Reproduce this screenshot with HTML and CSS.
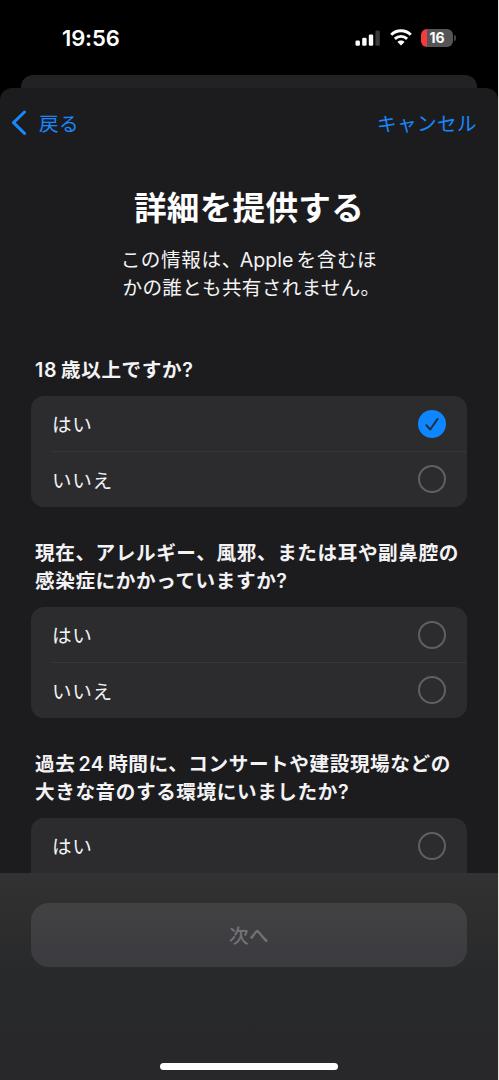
FILE: index.html
```
<!DOCTYPE html>
<html lang="ja">
<head>
<meta charset="utf-8">
<title>詳細を提供する</title>
<link rel="stylesheet" href="styles.css">
</head>
<body>
<div class="screen">
  <header class="status">
    <span class="time">19:56</span>
    <div class="status-icons">
      <svg class="signal" width="25" height="17" viewBox="0 0 25 17">
        <rect x="0.5" y="11.5" width="4.4" height="5.2" rx="1.3" fill="#fff"/>
        <rect x="7.2" y="8.8" width="4.4" height="7.9" rx="1.3" fill="#fff"/>
        <rect x="13.8" y="5.4" width="4.4" height="11.3" rx="1.3" fill="#fff"/>
        <rect x="20.4" y="1.5" width="4.4" height="15.2" rx="1.3" fill="#3a3a3c"/>
      </svg>
      <svg class="wifi" width="22" height="17" viewBox="0 0 22 17" fill="none" stroke="#fff" stroke-width="2.9">
        <path d="M1.2 5.8C6.6.4 15.4.4 20.8 5.8"/>
        <path d="M4.9 9.9C8.4 6.5 13.6 6.5 17.1 9.9"/>
        <path d="M11 16.5L7.5 13C9.4 11.1 12.6 11.1 14.5 13Z" fill="#fff" stroke="none"/>
      </svg>
      <div class="battery"><span class="battery-level">16</span><i class="battery-cap"></i></div>
    </div>
  </header>
  <div class="sheet-behind"></div>
  <main class="sheet">
    <nav class="nav">
      <a class="back"><svg width="16" height="25" viewBox="0 0 16 25" fill="none" stroke="#1787fb" stroke-width="3" stroke-linecap="round" stroke-linejoin="round"><path d="M13.5 2L2.5 12.7L13.5 23.4"/></svg><span>戻る</span></a>
      <a class="cancel">キャンセル</a>
    </nav>
    <h1 class="title">詳細を提供する</h1>
    <p class="intro">この情報は、<span class="latin-word">Apple</span>を含むほ<br><span class="intro-end">かの誰とも共有されません。</span></p>

    <section class="question">
      <h2><span class="num-start">18</span>歳以上ですか?</h2>
      <div class="card">
        <div class="row"><span>はい</span>
          <svg class="radio" width="28" height="28" viewBox="0 0 28 28"><circle cx="14" cy="14" r="14" fill="#0d86ff"/><path d="M8.3 15.1L12.2 19.5L19.6 8.9" fill="none" stroke="#202d3d" stroke-width="1.9" stroke-linecap="round" stroke-linejoin="round"/></svg>
        </div>
        <div class="row"><span>いいえ</span><i class="radio empty"></i></div>
      </div>
    </section>

    <section class="question">
      <h2>現在、アレルギー、風邪、または耳や副鼻腔の<br>感染症にかかっていますか?</h2>
      <div class="card">
        <div class="row"><span>はい</span><i class="radio empty"></i></div>
        <div class="row"><span>いいえ</span><i class="radio empty"></i></div>
      </div>
    </section>

    <section class="question">
      <h2>過去<span class="num">24</span>時間に、コンサートや建設現場などの<br>大きな音のする環境にいましたか?</h2>
      <div class="card card-cut">
        <div class="row"><span>はい</span><i class="radio empty"></i></div>
      </div>
    </section>
  </main>
  <footer class="footer">
    <button class="next" disabled><span>次へ</span></button>
    <div class="home-bar"></div>
  </footer>
</div>
</body>
</html>
```
FILE: styles.css
```
* { box-sizing: border-box; }

body {
  margin: 0;
  background: #e4e2df;
  font-family: Inter, "Noto Sans CJK JP", sans-serif;
  font-size: 19.6px;
  letter-spacing: 0.6px;
  color: #f3f3f5;
}

.screen {
  width: 498px;
  height: 1080px;
  display: flex;
  flex-direction: column;
  overflow: hidden;
  background: #000;
}

.status {
  flex: none;
  height: 75px;
  padding: 0 42px 0 62px;
  display: flex;
  align-items: center;
  justify-content: space-between;
}

.time {
  font-size: 22px;
  font-weight: 600;
  letter-spacing: -0.15px;
  color: #fff;
}

.status-icons {
  display: flex;
  align-items: center;
}

.wifi { margin: 0 9px 0 10px; }

.battery {
  display: flex;
  align-items: center;
}

.battery-level {
  width: 32px;
  height: 18px;
  border-radius: 6px;
  background: linear-gradient(90deg, #f43c3c 6px, #555557 6px);
  color: #fff;
  font-size: 14px;
  font-weight: 700;
  letter-spacing: 0;
  line-height: 18px;
  text-align: center;
}

.battery-cap {
  width: 2px;
  height: 6px;
  margin-left: 1px;
  border-radius: 0 2px 2px 0;
  background: #444446;
}

.sheet-behind {
  flex: none;
  height: 13px;
  margin: 0 21px;
  border-radius: 12px 12px 0 0;
  background: #222224;
}

.sheet {
  flex: none;
  height: 785px;
  overflow: hidden;
  border-radius: 12px 12px 0 0;
  background: #1c1c1e;
}

.nav {
  height: 69px;
  padding: 0 21px 0 11px;
  display: flex;
  align-items: center;
  justify-content: space-between;
  color: #1787fb;
  letter-spacing: 0.4px;
}

.back {
  display: flex;
  align-items: center;
  gap: 12px;
}

.title {
  margin: 27px 0 0;
  font-size: 32.6px;
  line-height: 48px;
  font-weight: 700;
  letter-spacing: 0.3px;
  text-align: center;
  color: #fff;
}

.intro {
  margin: 14px 0 0;
  line-height: 28px;
  text-align: center;
}

.intro-end {
  padding-left: 5px;
  letter-spacing: 0.3px;
}

.latin-word {
  margin-right: 3px;
  margin-left: -2px;
  letter-spacing: 0;
}

.question {
  padding: 0 31px;
  margin-top: 32px;
}

.intro + .question { margin-top: 54px; }

.question h2 {
  margin: 0 0 12px;
  padding-left: 4px;
  font-size: 19.6px;
  line-height: 28px;
  font-weight: 600;
  white-space: nowrap;
}

.num-start { margin-right: 4px; letter-spacing: 0.6px; }
.num { margin: 0 4px 0 3px; letter-spacing: 0.4px; }

.card {
  height: 111px;
  padding-left: 21px;
  border-radius: 13px;
  background: #2c2c2e;
}

.card-cut { border-radius: 13px 13px 0 0; }

.row {
  height: 55px;
  padding-right: 21px;
  display: flex;
  align-items: center;
  justify-content: space-between;
}

.row + .row {
  height: 56px;
  box-shadow: inset 0 1px #363638;
}

.radio { flex: none; }

.empty {
  width: 28px;
  height: 28px;
  border: 2px solid #606063;
  border-radius: 50%;
}

.footer {
  flex: 1;
  padding: 30px 31px 10px;
  display: flex;
  flex-direction: column;
  align-items: center;
  justify-content: space-between;
  background: linear-gradient(#323233 0, #2f2f30 30px, #28292a 105px, #28282a 100%);
}

.next {
  width: 100%;
  height: 64px;
  padding: 0 0 2px;
  border: 0;
  border-radius: 18px;
  background: linear-gradient(#424243, #3b3b40);
  color: #737378;
  font: inherit;
  font-weight: 500;
  letter-spacing: 0.3px;
}

.home-bar {
  width: 178px;
  height: 7px;
  border-radius: 4px;
  background: #fff;
}
```
